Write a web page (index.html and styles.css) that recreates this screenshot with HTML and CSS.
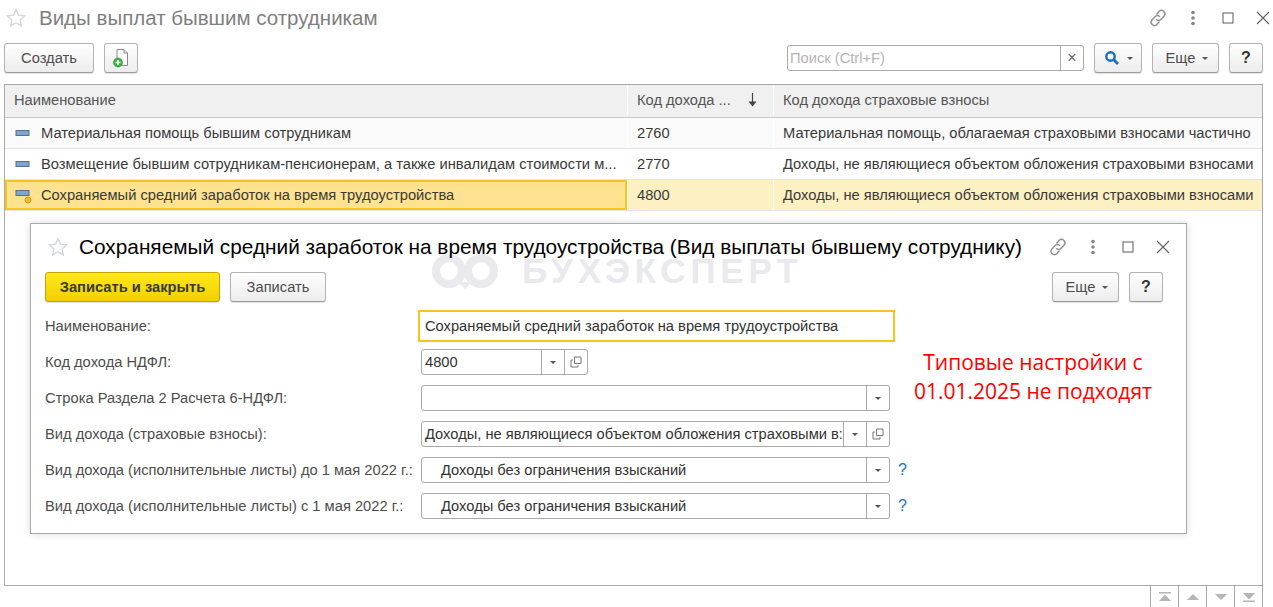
FILE: index.html
```html
<!DOCTYPE html>
<html lang="ru">
<head>
    <meta charset="utf-8">
    <title>Виды выплат бывшим сотрудникам</title>
    <link rel="stylesheet" href="styles.css">
</head>
<body>
    <svg class="sprites" width="0" height="0">
        <symbol id="star" viewBox="0 0 20 20">
            <path d="M10 1.500l2.500 5.600 6.100.7-4.500 4.100 1.200 6L10 14.900l-5.300 3 1.200-6-4.500-4.100 6.100-.7z" fill="#fff" stroke="#d3d6da" stroke-width="1.300"/>
        </symbol>
        <symbol id="link" viewBox="0 0 20 20">
            <g fill="none" stroke="#8f8f8f" stroke-width="1.400">
                <path d="M8.500 6.500l2.600-3a3.400 3.400 0 0 1 5 4.600l-3 3.200a3.400 3.400 0 0 1-5 0"/>
                <path d="M11.500 13.500l-2.600 3a3.400 3.400 0 0 1-5-4.600l3-3.200a3.400 3.400 0 0 1 5 0"/>
            </g>
        </symbol>
        <symbol id="dots" viewBox="0 0 20 20">
            <g fill="#858585"><circle cx="10" cy="4.500" r="1.800"/><circle cx="10" cy="10" r="1.800"/><circle cx="10" cy="15.500" r="1.800"/></g>
        </symbol>
        <symbol id="maximize" viewBox="0 0 20 20">
            <rect x="5" y="5" width="10" height="10" fill="none" stroke="#777" stroke-width="1.200"/>
        </symbol>
        <symbol id="close" viewBox="0 0 20 20">
            <path d="M4 4l12 12M16 4L4 16" fill="none" stroke="#666" stroke-width="1.200"/>
        </symbol>
        <symbol id="open-copy" viewBox="0 0 12 12">
            <path d="M4.500 1h6.500v6.500H4.500zM3 4H1v7h7V9" fill="#fff" stroke="#777" stroke-width="1"/>
        </symbol>
        <symbol id="row-item" viewBox="0 0 16 10">
            <rect x="1" y="2.500" width="13" height="5" fill="#7ba6d2" stroke="#5e6f84"/>
        </symbol>
    </svg>

    <header class="page-head">
        <svg class="star"><use href="#star"/></svg>
        <h1 class="page-title">Виды выплат бывшим сотрудникам</h1>
        <div class="window-icons">
            <svg><use href="#link"/></svg>
            <svg><use href="#dots"/></svg>
            <svg><use href="#maximize"/></svg>
            <svg><use href="#close"/></svg>
        </div>
    </header>

    <div class="toolbar">
        <button class="btn btn-create">Создать</button>
        <button class="btn btn-icon">
            <svg width="18" height="20" viewBox="0 0 18 20">
                <path d="M5 1.500h7l3.500 3.500v12.500H5z" fill="#fff" stroke="#8a8a8a"/>
                <path d="M12 1.500V5h3.500" fill="#e8e8e8" stroke="#8a8a8a"/>
                <circle cx="6" cy="14.500" r="4.500" fill="#3fae49" stroke="#2a8a35" stroke-width=".6"/>
                <path d="M6 12v5M3.500 14.500h5" stroke="#fff" stroke-width="1.400"/>
            </svg>
        </button>
        <div class="search">
            <span class="search-text">Поиск (Ctrl+F)</span>
            <span class="search-clear">×</span>
        </div>
        <button class="btn btn-find">
            <svg width="16" height="16" viewBox="0 0 16 16">
                <circle cx="6.500" cy="6.500" r="4.200" fill="none" stroke="#1d6fb5" stroke-width="2.400"/>
                <path d="M9.800 9.800l4.200 4.200" stroke="#1d6fb5" stroke-width="2.800"/>
            </svg>
            <span class="caret"></span>
        </button>
        <button class="btn btn-more">Еще<span class="caret"></span></button>
        <button class="btn btn-help">?</button>
    </div>

    <main class="list">
        <div class="list-row list-head">
            <div class="cell cell-name">Наименование</div>
            <div class="cell cell-code">Код дохода ...
                <svg class="sort-arrow" width="9" height="14" viewBox="0 0 9 14">
                    <path d="M4.500 0v10" stroke="#444" stroke-width="1.200"/>
                    <path d="M.5 8.500h8l-4 5z" fill="#444"/>
                </svg>
            </div>
            <div class="cell cell-kind">Код дохода страховые взносы</div>
        </div>
        <div class="list-row list-row-odd">
            <div class="cell cell-name"><svg class="row-icon"><use href="#row-item"/></svg>Материальная помощь бывшим сотрудникам</div>
            <div class="cell cell-code">2760</div>
            <div class="cell cell-kind">Материальная помощь, облагаемая страховыми взносами частично</div>
        </div>
        <div class="list-row">
            <div class="cell cell-name"><svg class="row-icon"><use href="#row-item"/></svg>Возмещение бывшим сотрудникам-пенсионерам, а также инвалидам стоимости м...</div>
            <div class="cell cell-code">2770</div>
            <div class="cell cell-kind">Доходы, не являющиеся объектом обложения страховыми взносами</div>
        </div>
        <div class="list-row list-row-current">
            <div class="cell cell-name">
                <svg class="row-icon" viewBox="0 0 16 14">
                    <rect x="1" y="2.500" width="13" height="5" fill="#7ba6d2" stroke="#5e6f84"/>
                    <circle cx="13" cy="12" r="3" fill="#f2b92c" stroke="#b98a12" stroke-width=".7"/>
                </svg>Сохраняемый средний заработок на время трудоустройства</div>
            <div class="cell cell-code">4800</div>
            <div class="cell cell-kind">Доходы, не являющиеся объектом обложения страховыми взносами</div>
        </div>
    </main>

    <footer class="list-nav">
        <span class="nav-btn">
            <svg width="14" height="10" viewBox="0 0 14 10"><path d="M1 0h12v1.500H1zM7 2.500L13 9H1z" fill="#b5b5b5"/></svg>
        </span>
        <span class="nav-btn">
            <svg width="14" height="10" viewBox="0 0 14 10"><path d="M7 2l6 6H1z" fill="#b5b5b5"/></svg>
        </span>
        <span class="nav-btn">
            <svg width="14" height="10" viewBox="0 0 14 10"><path d="M1 2h12L7 8z" fill="#b5b5b5"/></svg>
        </span>
        <span class="nav-btn">
            <svg width="14" height="10" viewBox="0 0 14 10"><path d="M1 1h12L7 7.500zM1 8.500h12V10H1z" fill="#b5b5b5"/></svg>
        </span>
    </footer>

    <section class="dialog">
        <div class="watermark">
            <svg class="watermark-logo" width="66" height="36" viewBox="0 0 66 36">
                <g fill="none" stroke="#e9e9ee" stroke-width="8">
                    <circle cx="17" cy="18" r="13"/>
                    <circle cx="49" cy="18" r="13"/>
                </g>
                <path d="M26 29h14l-7 7z" fill="#e9e9ee"/>
            </svg>
            <span class="watermark-text">БУХЭКСПЕРТ</span>
        </div>

        <header class="dialog-head">
            <svg class="star"><use href="#star"/></svg>
            <h2 class="dialog-title">Сохраняемый средний заработок на время трудоустройства (Вид выплаты бывшему сотруднику)</h2>
            <div class="window-icons">
                <svg><use href="#link"/></svg>
                <svg><use href="#dots"/></svg>
                <svg><use href="#maximize"/></svg>
                <svg><use href="#close"/></svg>
            </div>
        </header>

        <div class="dialog-bar">
            <button class="btn btn-primary">Записать и закрыть</button>
            <button class="btn btn-save">Записать</button>
            <button class="btn btn-more btn-more-dialog">Еще<span class="caret"></span></button>
            <button class="btn btn-help">?</button>
        </div>

        <div class="dialog-body">
            <form class="form">
                <div class="form-row form-row-name">
                    <label>Наименование:</label>
                    <div class="field field-focus">Сохраняемый средний заработок на время трудоустройства</div>
                </div>
                <div class="form-row">
                    <label>Код дохода НДФЛ:</label>
                    <div class="field field-short">
                        <span class="field-value">4800</span>
                        <span class="field-btn"><span class="caret"></span></span>
                        <span class="field-btn"><svg width="12" height="12"><use href="#open-copy"/></svg></span>
                    </div>
                </div>
                <div class="form-row">
                    <label>Строка Раздела 2 Расчета 6-НДФЛ:</label>
                    <div class="field">
                        <span class="field-value"></span>
                        <span class="field-btn"><span class="caret"></span></span>
                    </div>
                </div>
                <div class="form-row">
                    <label>Вид дохода (страховые взносы):</label>
                    <div class="field">
                        <span class="field-value">Доходы, не являющиеся объектом обложения страховыми в:</span>
                        <span class="field-btn"><span class="caret"></span></span>
                        <span class="field-btn"><svg width="12" height="12"><use href="#open-copy"/></svg></span>
                    </div>
                </div>
                <div class="form-row">
                    <label>Вид дохода (исполнительные листы) до 1 мая 2022 г.:</label>
                    <div class="field">
                        <span class="field-value field-value-indent">Доходы без ограничения взысканий</span>
                        <span class="field-btn"><span class="caret"></span></span>
                    </div>
                    <span class="hint">?</span>
                </div>
                <div class="form-row">
                    <label>Вид дохода (исполнительные листы) с 1 мая 2022 г.:</label>
                    <div class="field">
                        <span class="field-value field-value-indent">Доходы без ограничения взысканий</span>
                        <span class="field-btn"><span class="caret"></span></span>
                    </div>
                    <span class="hint">?</span>
                </div>
            </form>
            <p class="note">Типовые настройки с<br>01.01.2025 не подходят</p>
        </div>
    </section>
</body>
</html>
```

FILE: styles.css
```css
* {
    box-sizing: border-box;
}

body {
    margin: 0;
    height: 607px;
    position: relative;
    overflow: hidden;
    background: #fff;
    color: #333;
    font-family: "Liberation Sans", Arial, sans-serif;
    font-size: 14.7px;
}

.sprites {
    position: absolute;
}

.page-head {
    display: flex;
    align-items: center;
    height: 36px;
    padding-left: 6px;
}

.star {
    width: 20px;
    height: 20px;
    flex: none;
}

.page-title {
    margin: 0 0 0 13px;
    color: #7f7f7f;
    font-size: 20.5px;
    font-weight: normal;
}

.window-icons {
    display: flex;
    gap: 15px;
    margin-left: auto;
}

.window-icons svg {
    width: 20px;
    height: 20px;
}

.toolbar {
    display: flex;
    align-items: center;
    height: 30px;
    margin-top: 7px;
    padding: 0 10px 0 4px;
}

.btn {
    display: inline-flex;
    align-items: center;
    justify-content: center;
    height: 30px;
    padding: 0;
    border: 1px solid #b4b4b4;
    border-bottom-color: #9c9c9c;
    border-radius: 3px;
    background: linear-gradient(#fff, #ececec);
    box-shadow: 0 1px 1px rgba(0, 0, 0, 0.12);
    color: #4d4d4d;
    font-family: inherit;
    font-size: 14.7px;
}

.btn-create {
    width: 90px;
}

.btn-icon {
    width: 34px;
    margin-left: 10px;
}

.search {
    display: flex;
    align-items: center;
    width: 297px;
    height: 26px;
    margin-left: auto;
    border: 1px solid #a9a9a9;
    border-radius: 3px;
}

.search-text {
    flex: 1;
    padding-left: 2px;
    color: #b5b5b5;
}

.search-clear {
    width: 23px;
    height: 100%;
    border-left: 1px solid #a9a9a9;
    color: #666;
    font-size: 16px;
    line-height: 23px;
    text-align: center;
}

.btn-find {
    width: 48px;
    margin-left: 10px;
    gap: 7px;
}

.btn-more {
    width: 67px;
    margin-left: 10px;
    gap: 7px;
    padding-left: 3px;
}

.btn-help {
    width: 34px;
    margin-left: 10px;
    color: #333;
    font-size: 16px;
    font-weight: bold;
}

.caret {
    display: inline-block;
    width: 0;
    height: 0;
    border-top: 3px solid #555;
    border-left: 3px solid transparent;
    border-right: 3px solid transparent;
}

.list {
    height: 502px;
    margin: 11px 10px 0 4px;
    border: 1px solid #a9a9a9;
}

.list-row {
    display: grid;
    grid-template-columns: 622px 146px 1fr;
    height: 31px;
    border-bottom: 1px solid #e4e4e4;
    color: #3a3a3a;
}

.list-row-odd {
    background: #fafafa;
}

.list-head {
    height: 33px;
    padding-bottom: 2px;
    border-bottom: 1px solid #c9c9c9;
    background: #f0f0f0;
    color: #555;
}

.cell {
    display: flex;
    align-items: center;
    overflow: hidden;
    padding-left: 10px;
    white-space: nowrap;
}

.cell + .cell {
    padding-left: 9px;
    border-left: 1px solid #fff;
}

.list-head .cell-name {
    padding-left: 9px;
}

.row-icon {
    flex: none;
    width: 16px;
    height: 14px;
    margin-right: 10px;
    overflow: visible;
}

.sort-arrow {
    flex: none;
    margin-left: auto;
    margin-right: 16px;
}

.list-row-current {
    background: #fdf0c3;
}

.list-row-current .cell-name {
    padding-left: 8px;
    border: 2px solid #f8c51c;
    background: #fde28f;
}

.list-nav {
    display: flex;
    justify-content: flex-end;
    height: 21px;
    padding-right: 10px;
}

.nav-btn {
    display: flex;
    align-items: center;
    justify-content: center;
    width: 28px;
    border-left: 1px solid #a9a9a9;
}

.nav-btn:last-child {
    width: 29px;
    border-right: 1px solid #a9a9a9;
}

.dialog {
    position: absolute;
    top: 223px;
    left: 30px;
    width: 1157px;
    height: 311px;
    border: 1px solid #a9a9a9;
    background: #fff;
    box-shadow: 0 0 8px rgba(0, 0, 0, 0.15);
}

.watermark {
    position: absolute;
    top: 29px;
    left: 401px;
    display: flex;
    align-items: flex-start;
    gap: 24px;
    color: #e9e9ee;
    font-size: 35px;
    font-weight: bold;
    letter-spacing: 4.800px;
}

.watermark-text {
    margin-top: 5px;
    line-height: 25px;
}

.dialog-head {
    position: relative;
    display: flex;
    align-items: center;
    height: 46px;
    padding: 0 13px 0 17px;
}

.dialog-title {
    margin: 0 0 0 11px;
    color: #000;
    font-size: 20.800px;
    font-weight: normal;
    line-height: 22px;
    white-space: nowrap;
}

.dialog-bar {
    position: relative;
    display: flex;
    align-items: center;
    margin-top: 2px;
    padding: 0 23px 0 14px;
}

.btn-primary {
    width: 175px;
    border-color: #c3a400;
    background: linear-gradient(#ffe81a, #f2d000);
    color: #3a3a3a;
    font-weight: bold;
}

.btn-save {
    width: 96px;
    margin-left: 10px;
}

.btn-more-dialog {
    margin-left: auto;
}

.dialog-body {
    position: relative;
    display: flex;
    padding: 8px 0 0 14px;
}

.form {
    display: flex;
    flex-direction: column;
    gap: 10px;
}

.form-row {
    display: flex;
    align-items: center;
    height: 26px;
}

.form-row label {
    flex: none;
    width: 376px;
    color: #4d4d4d;
    white-space: nowrap;
}

.form-row-name {
    height: 32px;
    margin-bottom: -3px;
}

.form-row-name label {
    width: 373px;
}

.field {
    display: flex;
    align-items: stretch;
    width: 469px;
    height: 26px;
    border: 1px solid #a9a9a9;
    border-radius: 3px;
}

.field-focus {
    align-items: center;
    width: 477px;
    height: 32px;
    padding-left: 5px;
    border: 2px solid #f8c51c;
    border-radius: 0;
}

.field-short {
    width: 167px;
}

.field-value {
    flex: 1;
    min-width: 0;
    overflow: hidden;
    padding-left: 3px;
    line-height: 24px;
    white-space: nowrap;
}

.field-value-indent {
    padding-left: 19px;
}

.field-btn {
    display: flex;
    flex: none;
    align-items: center;
    justify-content: center;
    width: 23px;
    border-left: 1px solid #a9a9a9;
}

.hint {
    margin-left: 8px;
    color: #1a75bb;
    font-size: 16px;
}

.note {
    flex: 1;
    margin: 38px 0 0 0;
    padding-right: 27px;
    color: #f00;
    font-family: "Open Sans", sans-serif;
    font-size: 21px;
    line-height: 29px;
    text-align: center;
    white-space: nowrap;
}
```
